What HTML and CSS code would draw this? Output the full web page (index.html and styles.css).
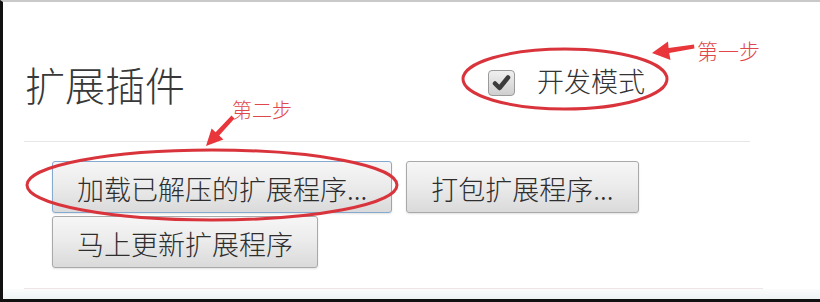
FILE: index.html
```html
<!DOCTYPE html>
<html lang="zh-CN">
<head>
<meta charset="utf-8">
<title>扩展插件</title>
<link rel="stylesheet" href="styles.css">
</head>
<body>
<div class="page">
  <div class="frame">
    <div class="header">
      <h1 class="title">扩展插件</h1>
      <label class="devmode">
        <span class="box">
          <svg width="27" height="26" viewBox="0 0 27 26"><path d="M7 13.5 L11.5 18 L20 7.5" fill="none" stroke="#3c3c3c" stroke-width="4.5" stroke-linecap="round" stroke-linejoin="round"/></svg>
        </span>
        <span class="devtext">开发模式</span>
      </label>
    </div>
    <div class="buttons">
      <button class="btn focused">加载已解压的扩展程序...</button>
      <button class="btn">打包扩展程序...</button>
      <button class="btn">马上更新扩展程序</button>
    </div>
    <div class="rule-bottom"></div>
    <div class="band"></div>
  </div>
  <div class="annot">
    <svg class="marks" width="820" height="302" viewBox="0 0 820 302">
      <ellipse cx="565" cy="79" rx="102" ry="30" fill="none" stroke="#d9343c" stroke-width="3"/>
      <ellipse cx="212" cy="185" rx="185" ry="35" fill="none" stroke="#d9343c" stroke-width="3"/>
      <polygon points="652,53 668,41.5 668.6,48 694,44.5 694.4,48.6 669.2,53 670.5,60" fill="#e8363a"/>
      <polygon points="206,146 211.6,128.5 215.6,132.2 231.5,115.6 234.5,118.5 219.2,135.6 223.4,139.6" fill="#e8363a"/>
    </svg>
    <span class="step step1">第一步</span>
    <span class="step step2">第二步</span>
  </div>
</div>
</body>
</html>
```

FILE: styles.css
```css
html, body {
  margin: 0;
  padding: 0;
  background: #ffffff;
}

body {
  font-family: "Noto Sans CJK SC", "Noto Sans", sans-serif;
}

.page {
  position: relative;
  width: 820px;
  height: 302px;
  overflow: hidden;
}

.frame {
  box-sizing: border-box;
  width: 820px;
  height: 302px;
  border-left: 3px solid #111111;
  border-top: 2px solid #c9c9c9;
  border-bottom: 3px solid #111111;
  background: #ffffff;
}

.header {
  box-sizing: border-box;
  display: flex;
  align-items: flex-start;
  margin-left: 21px;
  width: 726px;
  height: 140px;
  padding-top: 62px;
  border-bottom: 1px solid #e6e6e6;
}

.title {
  margin: 0 0 0 1px;
  font-size: 40px;
  line-height: 40px;
  font-weight: 300;
  color: #383838;
}

.devmode {
  display: flex;
  align-items: flex-start;
  margin-left: 303px;
  margin-top: 3px;
}

.box {
  box-sizing: border-box;
  display: block;
  width: 27px;
  height: 26px;
  margin-top: 3px;
  border: 1px solid #9a9a9a;
  border-radius: 4px;
  background: linear-gradient(#f0f0f0, #cfcfcf);
}

.box svg {
  display: block;
  margin: -1px 0 0 -1px;
}

.devtext {
  margin-left: 22px;
  font-size: 27px;
  line-height: 27px;
  font-weight: 300;
  color: #333333;
}

.buttons {
  display: flex;
  flex-wrap: wrap;
  gap: 3px 14px;
  width: 600px;
  margin-left: 49px;
  margin-top: 19px;
}

.btn {
  box-sizing: border-box;
  height: 52px;
  padding: 3px 24px 0;
  font-family: "Noto Sans CJK SC", "Noto Sans", sans-serif;
  font-size: 27px;
  line-height: 27px;
  font-weight: 300;
  color: #2e2e2e;
  border: 1px solid #a9a9a9;
  border-radius: 3px;
  background: linear-gradient(#f6f6f6, #ececec 45%, #dadada);
  box-shadow: 0 1px 2px rgba(0, 0, 0, 0.12);
}

.btn.focused {
  border-color: #86a9cf;
}

.rule-bottom {
  margin-left: 21px;
  margin-top: 20px;
  width: 739px;
  border-top: 1px solid #efe5e6;
}

.band {
  height: 10px;
  background: linear-gradient(#fbfcfc, #eef3f4);
}

.annot {
  position: absolute;
  left: 0;
  top: 0;
  width: 820px;
  height: 302px;
  pointer-events: none;
}

.marks {
  position: absolute;
  left: 0;
  top: 0;
}

.step {
  position: absolute;
  font-size: 20px;
  line-height: 20px;
  font-weight: 300;
  color: #e0474b;
}

.step1 {
  left: 697px;
  top: 40px;
  font-size: 21px;
  line-height: 21px;
}

.step2 {
  left: 232px;
  top: 100px;
}
```
